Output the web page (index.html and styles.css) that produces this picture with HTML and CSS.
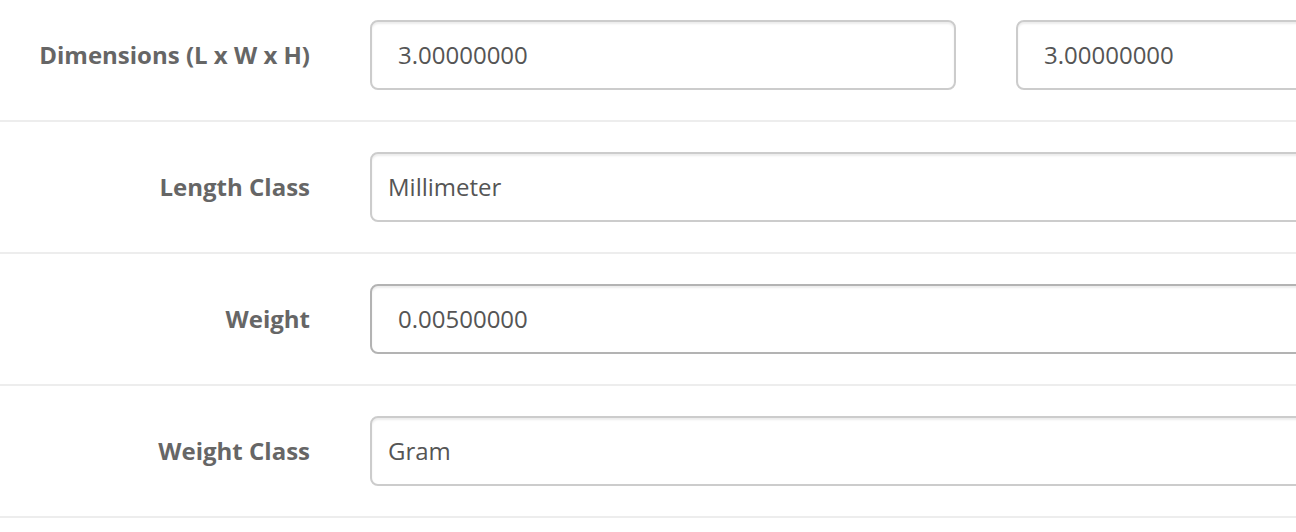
FILE: index.html
```html
<!DOCTYPE html>
<html lang="en">
<head>
    <meta charset="UTF-8">
    <meta name="viewport" content="width=device-width, initial-scale=1.0">
    <title>Product Data</title>
    <link rel="stylesheet" href="styles.css">
</head>
<body>

    <div class="form-horizontal">
        <div class="form-group">
            <label class="control-label" for="input-length">Dimensions (L x W x H)</label>
            <div class="control-field">
                <div class="dimension-row">
                    <input type="text" id="input-length" class="form-control" value="3.00000000">
                    <input type="text" id="input-width" class="form-control" value="3.00000000">
                    <input type="text" id="input-height" class="form-control" value="3.00000000">
                </div>
            </div>
        </div>

        <div class="form-group">
            <label class="control-label" for="input-length-class">Length Class</label>
            <div class="control-field">
                <select id="input-length-class" class="form-control form-select">
                    <option selected>Millimeter</option>
                    <option>Centimeter</option>
                    <option>Inch</option>
                </select>
            </div>
        </div>

        <div class="form-group">
            <label class="control-label" for="input-weight">Weight</label>
            <div class="control-field">
                <input type="text" id="input-weight" class="form-control is-hover" value="0.00500000">
            </div>
        </div>

        <div class="form-group">
            <label class="control-label" for="input-weight-class">Weight Class</label>
            <div class="control-field">
                <select id="input-weight-class" class="form-control form-select">
                    <option selected>Gram</option>
                    <option>Kilogram</option>
                    <option>Pound</option>
                </select>
            </div>
        </div>
    </div>

</body>
</html>
```

FILE: styles.css
```css
body {
    font-family: "Open Sans", "DejaVu Sans", sans-serif;
    margin: 0;
    padding: 0;
    background: #fff;
    overflow: hidden;
}
.form-horizontal {
    width: 2280px;
    margin-top: -10px;
}
.form-group {
    display: flex;
    align-items: center;
    padding: 30px 0;
    border-bottom: 2px solid #ededed;
}
.control-label {
    width: 310px;
    padding-right: 30px;
    padding-bottom: 2px;
    text-align: right;
    font-size: 24px;
    font-weight: 700;
    color: #666;
    flex-shrink: 0;
}
.control-field {
    flex: 1;
    padding-left: 30px;
}
.dimension-row {
    display: grid;
    grid-template-columns: repeat(3, 586px);
    gap: 60px;
}
.form-control {
    display: block;
    box-sizing: border-box;
    width: 100%;
    height: 70px;
    padding: 0 26px 2px;
    font-family: inherit;
    font-size: 24px;
    color: #555;
    background-color: #fff;
    border: 2px solid #ccc;
    border-radius: 8px;
    box-shadow: inset 0 2px 2px rgba(0, 0, 0, 0.075);
    outline: none;
}
.form-control.is-hover {
    border-color: #b3b3b3;
}
.form-select {
    appearance: none;
    -webkit-appearance: none;
    padding: 0 16px 2px;
}
```
